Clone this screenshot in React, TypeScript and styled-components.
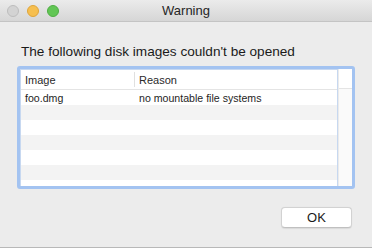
import React from "react";
import styled, { createGlobalStyle } from "styled-components";

const Global = createGlobalStyle`
  html, body { margin: 0; padding: 0; background: #ececec; }
  body { font-family: "Liberation Sans", Arial, sans-serif; color: #222; }
`;

const Window = styled.div`
  width: 372px;
  height: 248px;
  background: #ececec;
  display: flex;
  flex-direction: column;
  box-sizing: border-box;
  border-bottom: 1px solid #b8b8b8;
`;

const TitleBar = styled.div`
  height: 21px;
  border-bottom: 1px solid #c4c4c4;
  background: linear-gradient(#ebebeb, #d6d6d6);
  display: flex;
  align-items: center;
  position: relative;
  padding-left: 7px;
  gap: 8px;
`;

const Light = styled.span<{ $color: string; $border: string }>`
  width: 12px;
  height: 12px;
  border-radius: 50%;
  background: ${(p) => p.$color};
  box-sizing: border-box;
  border: 0.5px solid ${(p) => p.$border};
`;

const Title = styled.div`
  position: absolute;
  left: 0;
  right: 0;
  top: 0;
  bottom: 0;
  display: flex;
  align-items: center;
  justify-content: center;
  font-size: 13px;
  color: #262626;
`;

const Body = styled.div`
  flex: 1;
  display: flex;
  flex-direction: column;
  padding: 22px 17px 0 17px;
`;

const Heading = styled.div`
  font-size: 13.6px;
  line-height: 16px;
  padding-left: 4px;
  color: #1a1a1a;
  margin-bottom: 6px;
`;

const TableFrame = styled.div`
  height: 123px;
  width: 338px;
  box-sizing: border-box;
  border: 3px solid #a3c3f1;
  border-radius: 3px;
  background: #ffffff;
  display: flex;
  overflow: hidden;
`;

const TableMain = styled.div`
  flex: 1;
  display: flex;
  flex-direction: column;
  border: 1px solid #c7d8f0;
`;

const HeaderRow = styled.div`
  height: 19px;
  flex: none;
  display: grid;
  grid-template-columns: 114px 1fr;
  border-bottom: 1px solid #e4e4e4;
  font-size: 11px;
  color: #2a2a2a;
`;

const HeaderCell = styled.div<{ $divider?: boolean }>`
  display: flex;
  align-items: center;
  padding: 1px 0 0 4px;
  border-right: ${(p) => (p.$divider ? "1px solid #e0e0e0" : "none")};
  margin: 2px 0;
`;

const Row = styled.div<{ $alt: boolean }>`
  height: 15px;
  flex: none;
  display: grid;
  grid-template-columns: 114px 1fr;
  background: ${(p) => (p.$alt ? "#f3f3f3" : "#ffffff")};
  font-size: 10.6px;
  color: #1e1e1e;
`;

const Cell = styled.div`
  display: flex;
  align-items: center;
  padding: 1px 0 0 4px;
  white-space: nowrap;
`;

const Scroller = styled.div`
  width: 13px;
  display: flex;
  flex-direction: column;
  border-left: 1px solid #ebebeb;
  background: #fafafa;
`;

const ScrollHead = styled.div`
  height: 19px;
  background: #ffffff;
  border-bottom: 1px solid #e4e4e4;
`;

const Footer = styled.div`
  display: flex;
  justify-content: flex-end;
  padding: 18px 3px 0 0;
`;

const Button = styled.button`
  width: 71px;
  height: 21px;
  background: #ffffff;
  border: 1px solid #d2d2d2;
  border-bottom-color: #c0c0c0;
  border-radius: 4px;
  box-shadow: 0 0.5px 1px rgba(0, 0, 0, 0.08);
  font-family: "Liberation Sans", Arial, sans-serif;
  font-size: 13px;
  color: #1a1a1a;
  padding: 0;
`;

const rows = [
  { image: "foo.dmg", reason: "no mountable file systems" },
  { image: "", reason: "" },
  { image: "", reason: "" },
  { image: "", reason: "" },
  { image: "", reason: "" },
  { image: "", reason: "" },
  { image: "", reason: "" },
];

export default function App() {
  return (
    <>
      <Global />
      <Window>
        <TitleBar>
          <Light $color="#d3d3d3" $border="#bdbdbd" />
          <Light $color="#f6bf4f" $border="#dfa53a" />
          <Light $color="#62c655" $border="#4fae43" />
          <Title>Warning</Title>
        </TitleBar>
        <Body>
          <Heading>The following disk images couldn't be opened</Heading>
          <TableFrame>
            <TableMain>
              <HeaderRow>
                <HeaderCell $divider>Image</HeaderCell>
                <HeaderCell>Reason</HeaderCell>
              </HeaderRow>
              {rows.map((r, i) => (
                <Row key={i} $alt={i % 2 === 1}>
                  <Cell>{r.image}</Cell>
                  <Cell>{r.reason}</Cell>
                </Row>
              ))}
            </TableMain>
            <Scroller>
              <ScrollHead />
            </Scroller>
          </TableFrame>
          <Footer>
            <Button>OK</Button>
          </Footer>
        </Body>
      </Window>
    </>
  );
}
